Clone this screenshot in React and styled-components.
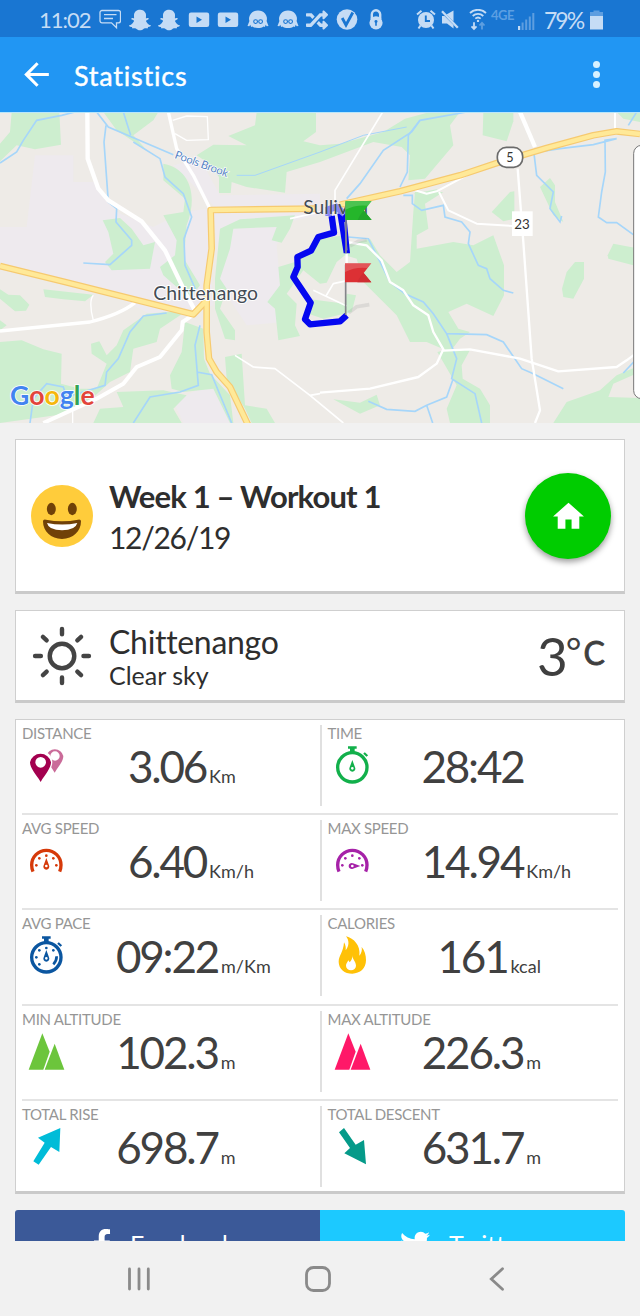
import styled, { createGlobalStyle } from "styled-components";
import { FaFacebookF, FaRandom, FaSnapchatGhost, FaTwitter } from "react-icons/fa";
import { MdArrowBack, MdHome } from "react-icons/md";

const stats = [
  { label: "DISTANCE", icon: "pins", color: "#a3004f", value: "3.06", unit: "Km" },
  { label: "TIME", icon: "timer", color: "#12b04b", value: "28:42", unit: "" },
  { label: "AVG SPEED", icon: "gauge", color: "#d63a0a", value: "6.40", unit: "Km/h" },
  { label: "MAX SPEED", icon: "gaugeMax", color: "#a622a8", value: "14.94", unit: "Km/h" },
  { label: "AVG PACE", icon: "pace", color: "#0b56a0", value: "09:22", unit: "m/Km" },
  { label: "CALORIES", icon: "fire", color: "#ffc107", value: "161", unit: "kcal" },
  { label: "MIN ALTITUDE", icon: "peaks", color: "#6cc53c", value: "102.3", unit: "m" },
  { label: "MAX ALTITUDE", icon: "peaks", color: "#ff1868", value: "226.3", unit: "m" },
  { label: "TOTAL RISE", icon: "rise", color: "#00bcd8", value: "698.7", unit: "m" },
  { label: "TOTAL DESCENT", icon: "descent", color: "#059a89", value: "631.7", unit: "m" },
];

const Dots = ({ points }) => points.map(([x, y]) => <circle key={`${x}-${y}`} cx={x} cy={y} r="4" />);

const StatIcon = ({ name, color }) => (
  <StatSvg viewBox="0 0 132 132" fill={color}>
    {name === "pins" && (
      <>
        <path
          opacity="0.58"
          fillRule="evenodd"
          d="M92 89C80 70 67 54 67 39a26 25 0 0 1 51 0C118 54 104 70 92 89ZM93 25a14 14 0 1 0 0 28a14 14 0 1 0 0-28Z"
        />
        <path d="M50 122C34 98 15 77 15 58a35 35 0 0 1 70 0C85 77 66 98 50 122Z" fill="#fff" />
        <path
          fillRule="evenodd"
          d="M50 117C36 94 18 76 18 58a32 31 0 0 1 63 0C81 76 64 94 50 117ZM50 42a16 16 0 1 0 0 32a16 16 0 1 0 0-32Z"
        />
      </>
    )}
    {(name === "gauge" || name === "gaugeMax") && (
      <>
        <path d="M27 101Q23 92 23 81a44 44 0 0 1 88 0Q111 92 107 101" fill="none" stroke={color} strokeWidth="10" />
        <Dots points={[[37, 82], [46, 61], [67, 53], [88, 61], [97, 82]]} />
        <path
          transform={name === "gaugeMax" ? "rotate(90 67 84)" : undefined}
          fillRule="evenodd"
          d="M67 60l8 22a9 9 0 1 1-16 0ZM67 80a4 4 0 1 0 0 8a4 4 0 1 0 0-8Z"
        />
      </>
    )}
    {(name === "timer" || name === "pace") && (
      <>
        <circle cx="67" cy="73" r="44" fill="none" stroke={color} strokeWidth="10" />
        <path d="M54 10h26v7h-6v12H60V17h-6Z" />
        <path d="M102 30l10 9" stroke={color} strokeWidth="7" />
        <path
          fillRule="evenodd"
          d="M67 51l8 22a9 9 0 1 1-16 0ZM67 72a4 4 0 1 0 0 8a4 4 0 1 0 0-8Z"
        />
        {name === "pace" && (
          <>
            <Dots points={[[37, 73], [46, 52], [67, 45], [88, 52], [46, 94]]} />
            <path d="M98 70q0 14-10 24" fill="none" stroke={color} strokeWidth="8" />
          </>
        )}
      </>
    )}
    {name === "fire" && (
      <>
        <path d="M48 10C72 16 92 38 88 68C94 62 97 52 95 42C104 52 108 66 108 82C108 106 90 122 67 122C44 122 26 108 26 86C26 68 40 58 42 28C47 36 48 44 47 52C57 40 59 24 48 10Z" />
        <path d="M67 66C66 78 78 86 78 98a15 14 0 0 1-30 0C48 92 52 88 55 82L59 88C65 82 67 76 67 66Z" fill="#fff" />
      </>
    )}
    {name === "peaks" && (
      <>
        <path d="M55 13L14 122H58L77 68Z" />
        <path d="M92 44L62 122H121Z" />
      </>
    )}
    {name === "rise" && <path d="M109 12L42 41L62 56L28 112L44 122L81 69L106 84Z" />}
    {name === "descent" && <path d="M42 12L27 25L60 72L43 88L108 121L102 48L77 62Z" />}
  </StatSvg>
);

const Face = () => (
  <svg viewBox="0 0 22 22" width="22" height="22" fill="currentColor">
    <path d="M11 1.500a8.800 8.200 0 0 1 8.600 10.500L21.500 17l-1.800.3-1-1.500-.8 2.200-1.300-.6C15.200 18.500 13.200 19 11 19s-4.200-.5-5.600-1.600l-1.300.6-.8-2.200-1 1.500L.5 17l1.900-5A8.800 8.200 0 0 1 11 1.500Z" />
    <g fill="none" stroke="#1976d2" strokeWidth="1.100">
      <circle cx="8.600" cy="12.600" r="1.900" />
      <circle cx="13.600" cy="12.600" r="1.900" />
    </g>
  </svg>
);

const Play = () => (
  <svg viewBox="0 0 22 22" width="22" height="22" fill="currentColor">
    <path fillRule="evenodd" d="M3 3.500h16a2.200 2.200 0 0 1 2.200 2.200v10.100A2.200 2.200 0 0 1 19 18H3a2.200 2.200 0 0 1-2.200-2.200V5.700A2.200 2.200 0 0 1 3 3.500ZM8.500 7.500v6.400l5.500-3.200Z" />
  </svg>
);

const StatusBar = () => (
  <Status>
    <Clock>11:02</Clock>
    <Notifications>
      <svg viewBox="0 0 22 22" width="22" height="22" fill="none" stroke="currentColor" strokeWidth="1.300">
        <path d="M3 1.500h16.500a2 2 0 0 1 2 2v8.300a2 2 0 0 1-2 2h-2v5l-5-5H3a2 2 0 0 1-2-2V3.500a2 2 0 0 1 2-2ZM5 5.700h12.500M5 9.500h9" />
      </svg>
      <FaSnapchatGhost size={22} />
      <FaSnapchatGhost size={22} />
      <Play />
      <Play />
      <Face />
      <Face />
      <FaRandom size={22} />
      <svg viewBox="0 0 22 22" width="22" height="22">
        <circle cx="11" cy="10.500" r="10.300" fill="currentColor" />
        <path d="M6.200 9l3.800 7L16.800 3.500" fill="none" stroke="#1976d2" strokeWidth="2.800" />
      </svg>
      <svg viewBox="0 0 22 22" width="22" height="22">
        <path d="M6.800 10V5.500a4.200 4.200 0 0 1 8.400 0V10" fill="none" stroke="currentColor" strokeWidth="2.400" />
        <circle cx="11" cy="13.800" r="6.600" fill="currentColor" />
        <path d="M11 11a1.500 1.500 0 0 1 .8 2.800v3h-1.600v-3A1.500 1.500 0 0 1 11 11Z" fill="#1976d2" />
      </svg>
    </Notifications>
    <Signals>
      <svg viewBox="0 0 20 22" width="20" height="22" fill="none" stroke="currentColor">
        <circle cx="10" cy="11" r="8" fill="currentColor" stroke="none" />
        <path d="M1 5.500L5.500 1.700M19 5.500L14.500 1.700M4.500 16.500L2.500 19.500M15.500 16.500L17.500 19.500" strokeWidth="2" />
        <path d="M9.800 6.500V12H14" stroke="#1976d2" strokeWidth="1.900" />
      </svg>
      <Gap $left={5}>
        <svg viewBox="0 0 18 22" width="18" height="22" fill="currentColor">
          <path d="M5.500 5.500L12.500 1.500V12.500ZM1 7h2.500L12.500 16v3.500L6 14.500H1Z" />
          <path d="M1 2.200L16.800 18.700" stroke="currentColor" strokeWidth="2.300" />
        </svg>
      </Gap>
      <Gap $left={10}>
        <svg viewBox="0 0 18 22" width="18" height="22" fill="none" stroke="currentColor" strokeWidth="1.800">
          <path d="M1 4a11.500 11.500 0 0 1 16 0M3.700 7a7.600 7.600 0 0 1 10.600 0M6.300 9.700a4 4 0 0 1 5.400 0" />
          <circle cx="9" cy="11.900" r="1.200" fill="currentColor" stroke="none" />
          <path d="M5 13.300v6.500M2.500 17.300L5 20l2.500-2.700" />
          <path d="M13 20.500V14M10.500 16.500l2.500-2.700 2.500 2.700" opacity="0.4" />
        </svg>
      </Gap>
      <Network>4GE</Network>
      <Gap $left={3}>
        <svg viewBox="0 0 17 22" width="17" height="22" fill="currentColor">
          <path d="M0 17h2.200v4H0Z" />
          <path opacity="0.4" d="M3.600 13.500h2V21h-2ZM7.200 10.500h2V21h-2ZM10.800 7.500h2V21h-2ZM14.300 4h2v17h-2Z" />
        </svg>
      </Gap>
      <Percent>79%</Percent>
      <Gap $left={6}>
        <svg viewBox="0 0 13 22" width="13" height="22" fill="currentColor">
          <path opacity="0.4" d="M3.500 1.500h6V3H13v4H0V3h3.500Z" />
          <path d="M0 7h13v13.500H0Z" />
        </svg>
      </Gap>
    </Signals>
  </Status>
);

const Flag = ({ x, y, color, dark, pole }) => (
  <g transform={`translate(${x} ${y})`}>
    <path d={`M1 4V${pole}`} stroke="#85858a" strokeWidth="5" />
    <path d="M-1 0H78L55 29L78 57H-1Z" fill={color} />
    <path d="M36 57Q46 34 55 29L78 57Z" fill={dark} />
    <path d="M-1 0H78L66 14Q30 10-1 26Z" fill="#fff" opacity="0.180" />
  </g>
);

const RouteMap = () => (
  <MapSvg viewBox="0 0 1920 933" preserveAspectRatio="none">
    <rect width="1920" height="933" fill="#eeebe7" />
    <g fill="#eeeaee">
      <path d="M105 130H220V210H290L350 300L460 345L550 300L620 290L640 580L480 620L360 560L0 450V345H80Z" />
      <path d="M520 160L600 140L660 250L960 245V310L860 330L830 400L850 630L740 640L660 520L640 280Z" />
      <path d="M560 850L640 810L700 933H550L525 880Z" />
    </g>
    <g fill="#cdeecf">
      <path d="M35 0H178L183 98L105 112L50 100L0 148V95L30 60Z" />
      <path d="M310 0H475L460 25L400 70L440 115L350 55Z" />
      <path d="M770 0H948V60L910 88L960 100L1020 95L1150 60L1215 20L1290 0H1380L1350 40L1360 100L1275 200L1225 205L1230 130L1205 105L1120 90L960 150L910 165L860 180L855 242L740 225L695 210L692 243H657V195L620 150L590 130L640 98L740 100L685 72L765 40Z" />
      <path d="M1450 0H1540V28L1520 88L1448 70Z" />
      <path d="M1850 0H1920V30L1870 20Z" />
      <path d="M490 155C570 170 595 250 560 340L552 440L600 520L570 560L490 490L480 465L525 430L530 385L490 310L550 300L555 260L490 205Z" />
      <path d="M308 325L360 318L395 350L430 400L465 390L450 470L335 475L315 450L340 425L325 360Z" />
      <path d="M130 532L280 548L255 568L190 562L135 555Z" />
      <path d="M0 532L25 548L60 550L88 578L78 596L45 598L0 560ZM0 625L20 640L0 655Z" />
      <path d="M0 690L65 685L130 712L185 725L183 815L240 830L290 830L320 755L275 725L273 695L298 688L320 730L350 700L370 655L440 605L505 600L555 600L480 650L470 690L400 710L390 780L330 810L275 860L200 905L0 933Z" />
      <path d="M555 630L610 650L612 740L630 785L690 850L700 933H690L640 830L550 840L515 830L510 790L545 720Z" />
      <path d="M350 840L490 835L560 850L520 890L545 933H280L300 890L370 885Z" />
      <path d="M655 400L660 350L720 322L885 310L870 350L845 392L815 385L830 345L700 350L690 410L660 500L680 530L660 590L705 655V685L675 680L645 590L645 500Z" />
      <path d="M725 725L735 880L800 890L825 933H755L735 890L680 800L675 735Z" />
      <path d="M885 450L960 380L1035 370L1040 400L1110 380L1140 430L1190 480L1230 450L1240 300L1245 240L1330 240L1275 275L1285 350L1250 370L1250 410L1360 390L1420 400L1480 370L1512 460V550L1480 612L1400 575L1345 600L1375 650L1410 660L1380 680L1350 720L1280 690L1230 690L1190 610L1090 510L1070 440L1035 430L1010 450L980 512L960 515L910 475L860 545L890 575L885 640L900 672L835 685L825 590L802 570L840 520L835 465Z" />
      <path d="M920 560L1035 575L1040 545L1068 550L1055 600L970 620L925 605Z" />
      <path d="M1312 720L1345 712L1410 714L1385 760L1388 800L1440 830L1470 880V933H1350L1340 890L1370 820Z" />
      <path d="M1000 862L1080 872L1130 848L1140 880L1080 905Z" />
      <path d="M1475 300L1530 240L1543 238V320L1510 328Z" />
      <path d="M1620 225L1650 198L1665 220V270L1690 330L1660 310Z" />
      <path d="M1686 530L1700 480L1725 450H1752V500L1720 560L1690 555Z" />
      <path d="M1823 430L1840 395L1920 410V465L1825 440Z" />
      <path d="M1660 933L1700 870L1800 835L1850 790L1920 760V780L1840 815L1825 855L1920 858V933Z" />
      <path d="M1240 245L1310 232L1320 245L1280 255Z" />
    </g>
    <g fill="none" stroke="#a6d6fa" strokeWidth="5">
      <path d="M0 153L50 120L70 85L110 25L185 10L225 0" />
      <path d="M290 0L325 45L520 128M370 0L392 70M318 40L312 90L325 270L350 290L348 330L395 385L395 400L330 458L250 453" />
      <path d="M400 90L480 140L495 195L550 245L575 315L552 380L555 460L590 540" />
      <path d="M710 190L765 190L960 120L1090 70L1220 45" strokeWidth="3" />
      <path d="M500 603L430 612L390 660L355 740L320 780L315 820L200 855L190 825L140 815L100 860L90 933" />
      <path d="M400 933L450 855L540 840L595 820L585 700L600 640M590 780L635 788L695 933" />
      <path d="M1400 0L1260 25L1235 60L1150 115L1080 215L1040 260" />
      <path d="M1260 25L1225 70L1222 180L1200 225M1210 250L1237 250V275L1265 295L1330 280L1335 315L1385 330L1410 360L1405 395L1435 460L1460 470L1470 500L1510 535L1540 543" />
      <path d="M1045 375L1105 380L1140 450L1170 510L1215 545L1270 570L1300 605L1340 665L1460 668L1510 690L1565 770L1600 785L1690 830" />
      <path d="M1340 665L1370 740L1355 800L1425 845L1445 933M1358 805L1340 855L1280 880L1245 898L1160 892L1105 868M1280 880L1298 933" />
      <path d="M1602 125L1610 190L1660 240L1650 290L1680 330L1685 312" />
      <path d="M1600 122L1680 110L1780 98L1850 80L1815 85L1816 180L1805 240L1795 315L1820 332L1850 332L1900 368" />
      <path d="M1885 40L1910 0M1920 730L1870 783" />
    </g>
    <g fill="none" stroke="#fff" strokeWidth="10" strokeLinejoin="round">
      <path d="M262 0L263 140L295 230L325 265L425 328L495 415L560 550L590 605" strokeWidth="13" />
      <path d="M505 0L530 110L580 190L630 290" />
      <path d="M518 25L560 12L622 14L625 83L560 85L525 65" strokeWidth="4" />
      <path d="M0 657L270 630C330 615 370 600 405 572" />
      <path d="M585 605L548 630L545 655L480 735L410 765L370 815L290 860L130 933" strokeWidth="12" />
      <path d="M280 625C270 590 270 560 280 550M218 895V933" strokeWidth="4" />
      <path d="M705 730L760 765L825 770L930 850L1030 933M930 850L960 845" strokeWidth="5" />
      <path d="M870 320L960 300M940 535L1040 582M978 552L1000 515L1045 505" strokeWidth="5" />
      <path d="M1148 0L1005 235V280" strokeWidth="5" />
      <path d="M1560 0L1605 105" strokeWidth="13" />
      <path d="M1845 0V55M1245 235L1280 245L1310 238L1400 190M1317 240L1345 295L1430 335L1540 342" strokeWidth="6" />
      <path d="M1040 390L1100 400L1145 445L1170 510L1210 535L1240 580L1285 610L1300 660L1330 712L1310 755L1255 795L1110 830L960 842M1330 716L1410 712L1560 740L1675 778L1850 765L1880 745L1920 715" strokeWidth="7" />
      <path d="M1553 170L1570 390L1595 740L1620 895L1605 933M1040 424V454" strokeWidth="7" />
    </g>
    {[["#f6ca70", 20], ["#ffe998", 13]].map(([stroke, width]) => (
      <g key={stroke} fill="none" stroke={stroke} strokeWidth={width} strokeLinejoin="round">
        <path d="M0 462L195 510L580 607L620 565" />
        <path d="M950 290L632 294L635 410L620 520L620 660L627 740L650 780L690 825L745 940" />
        <path d="M1020 278L1200 238L1380 190L1500 150L1640 108L1780 70L1850 58L1920 66" />
      </g>
    ))}
    <path
      d="M1040 610L1020 628L930 637L915 622L932 572L880 495L893 465L892 435L933 416L955 375L1002 362L995 312"
      fill="none"
      stroke="#0508f0"
      strokeWidth="19"
      strokeLinejoin="round"
    />
    <path d="M1012 305L1031 424H1050L1038 300Z" fill="#0508f0" />
    <path d="M1034 330L1041 415" stroke="#9a9ac8" strokeWidth="3" />
    <path d="M986 312V292L1008 285L1034 306" fill="none" stroke="#8583f3" strokeWidth="20" />
    <g fontFamily="Lato, sans-serif" fill="#444c55" stroke="#fff" strokeWidth="6" paintOrder="stroke">
      <text x="460" y="563" fontSize="57" textLength="314" lengthAdjust="spacingAndGlyphs">Chittenango</text>
      <text x="910" y="306" fontSize="57" strokeWidth="1" textLength="194" lengthAdjust="spacingAndGlyphs">Sullivan</text>
      <text x="522" y="138" fontSize="34" fill="#5683c4" strokeWidth="4" transform="rotate(20 522 138)" textLength="168">
        Pools Brook
      </text>
    </g>
    <path d="M1050 402L1075 388L1100 384M1046 602L1070 584L1108 578" stroke="#999" strokeWidth="11" opacity="0.22" fill="none" />
    <Flag x={1037} y={267} color="#25b62b" dark="#22a52a" pole={157} />
    <Flag x={1036} y={454} color="#dc3034" dark="#cf2d33" pole={155} />
    <rect x="1492" y="106" width="76" height="60" rx="27" fill="#fff" stroke="#6b6b6b" strokeWidth="5" />
    <rect x="1536" y="298" width="62" height="74" fill="#fff" />
    <g fontFamily="Lato, sans-serif" fill="#333" textAnchor="middle">
      <text x="1530" y="149" fontSize="38">5</text>
      <text x="1566" y="351" fontSize="40">23</text>
    </g>
    <rect x="1901" y="100" width="60" height="760" rx="24" fill="#fff" stroke="#777" strokeWidth="3" />
    <text x="30" y="878" fontFamily="Lato, sans-serif" fontSize="82" stroke="#fff" strokeWidth="5" paintOrder="stroke" textLength="254" lengthAdjust="spacingAndGlyphs">
      <Letter $color="#4284f0">G</Letter>
      <Letter $color="#e2453b">o</Letter>
      <Letter $color="#f5b70c">o</Letter>
      <Letter $color="#4284f0">g</Letter>
      <Letter $color="#34a353">l</Letter>
      <Letter $color="#e2453b">e</Letter>
    </text>
    <rect width="1920" height="3" fill="#b9e6fb" />
  </MapSvg>
);

const App = () => {
  return (
    <Screen>
      <GlobalStyle />
      <StatusBar />
      <AppBar>
        <MdArrowBack size={37} />
        <h1>Statistics</h1>
        <MenuDots>
          <i />
          <i />
          <i />
        </MenuDots>
      </AppBar>
      <RouteMap />

      <Content>
        <Card $height={155}>
          <Emoji viewBox="0 0 186 186">
            <circle cx="93" cy="93" r="93" fill="#ffcc3b" />
            <g fill="#704108">
              <ellipse cx="61" cy="72" rx="13.500" ry="18.500" />
              <ellipse cx="124" cy="72" rx="13.500" ry="18.500" />
              <path d="M36 109q0-7 9-5q48 9 96 0q9-2 9 5c0 30-24 53-57 53s-57-23-57-53Z" />
            </g>
            <path d="M48 114q46 9 91 0q-6 22-46 22t-45-22Z" fill="#fff" />
          </Emoji>
          <Details>
            <WorkoutName>Week 1 – Workout 1</WorkoutName>
            <WorkoutDate>12/26/19</WorkoutDate>
          </Details>
          <HomeButton>
            <MdHome size={37} />
          </HomeButton>
        </Card>

        <Card $height={93}>
          <Sun viewBox="0 0 176 176">
            <circle cx="88" cy="88" r="36" />
            <path d="M88 9v15M88 151v16M9 88h17M151 88h16M32 32l11 10M144 32l-11 10M32 144l11-10M144 144l-11-10" />
          </Sun>
          <Details>
            <Place>Chittenango</Place>
            <Sky>Clear sky</Sky>
          </Details>
          <Temperature>
            3<Degree>°</Degree>
            <Celsius>C</Celsius>
          </Temperature>
        </Card>

        <StatGrid>
          {stats.map((stat, i) => (
            <Stat key={stat.label} $right={i % 2 === 1} $last={i > 7}>
              <StatLabel>{stat.label}</StatLabel>
              <StatBody>
                <StatIcon name={stat.icon} color={stat.color} />
                <Reading>
                  <Value>{stat.value}</Value>
                  <Unit>{stat.unit}</Unit>
                </Reading>
              </StatBody>
            </Stat>
          ))}
        </StatGrid>

        <Share>
          <ShareButton $color="#3b5998" $pad={72} $gap={13}>
            <FaFacebookF size={30} />
            Facebook
          </ShareButton>
          <ShareButton $color="#1cc9ff" $pad={80} $gap={19}>
            <FaTwitter size={30} />
            Twitter
          </ShareButton>
        </Share>
      </Content>

      <NavBar>
        <svg viewBox="0 0 24 24" width="24" height="24">
          <path d="M2.500 2v20M12 2v20M21.300 2v20" />
        </svg>
        <svg viewBox="0 0 26 26" width="26" height="26">
          <rect x="1.500" y="1.500" width="23" height="23" rx="7" />
        </svg>
        <svg viewBox="0 0 24 24" width="24" height="24">
          <path d="M17.500 1.800L6.300 12l11.200 10.200" />
        </svg>
      </NavBar>
    </Screen>
  );
};

export default App;

const GlobalStyle = createGlobalStyle`
  * {
    box-sizing: border-box;
  }

  body {
    margin: 0;
    background: #f1f1f1;
    font-family: Lato, "Open Sans", sans-serif;
    font-variant-ligatures: none;
  }
`;

const Screen = styled.div`
  width: 640px;
  height: 1316px;
  display: flex;
  flex-direction: column;
  overflow: hidden;
  background: #f1f1f1;
`;

const Status = styled.div`
  flex: none;
  height: 37px;
  padding: 2px 37px 0 39px;
  display: flex;
  align-items: center;
  background: #1976d2;
  color: #c5dcf5;
`;

const Clock = styled.span`
  width: 60px;
  font-size: 22px;
  letter-spacing: -1px;
`;

const Notifications = styled.div`
  display: flex;
  gap: 7.6px;
`;

const Signals = styled.div`
  margin-left: auto;
  display: flex;
  align-items: center;
`;

const Gap = styled.span`
  display: flex;
  margin-left: ${({ $left }) => $left}px;
`;

const Network = styled.span`
  width: 24px;
  margin: -10px 0 0 4px;
  font-size: 13px;
  font-weight: 700;
  letter-spacing: -0.5px;
  color: #5c9fe2;
`;

const Percent = styled.span`
  width: 40px;
  margin-left: 9px;
  font-size: 23px;
  letter-spacing: -2px;
`;

const AppBar = styled.header`
  flex: none;
  height: 75px;
  padding: 0 40px 0 18px;
  display: flex;
  align-items: center;
  background: #2196f3;
  color: #fff;

  h1 {
    margin: 2px 0 0 19px;
    font-size: 27px;
    font-weight: 400;
    letter-spacing: 0.8px;
    -webkit-text-stroke: 0.4px;
  }
`;

const MenuDots = styled.div`
  margin-left: auto;
  display: flex;
  flex-direction: column;
  gap: 2.6px;

  i {
    width: 7px;
    height: 7px;
    border-radius: 50%;
    background: #d8f1ff;
  }
`;

const MapSvg = styled.svg`
  flex: none;
  display: block;
  width: 640px;
  height: 311px;
`;

const Letter = styled.tspan`
  fill: ${({ $color }) => $color};
  font-weight: 700;
`;

const Content = styled.main`
  flex: 1;
  min-height: 0;
  overflow: hidden;
  padding: 15.5px 15px 0;
  display: flex;
  flex-direction: column;
  gap: 16px;
`;

const Card = styled.section`
  flex: none;
  height: ${({ $height }) => $height}px;
  padding: 2px 13px 0 15px;
  display: flex;
  align-items: center;
  background: #fff;
  border: 1px solid #cfcfcf;
  border-bottom: 3px solid #cacaca;
`;

const Emoji = styled.svg`
  width: 62px;
  height: 62px;
`;

const Sun = styled.svg`
  width: 62px;
  height: 62px;
  padding: 1px;
  fill: none;
  stroke: #444;
  stroke-width: 13;
  stroke-linecap: round;
`;

const Details = styled.div`
  margin-left: 16px;
  color: #2e2e2e;
  white-space: nowrap;
`;

const WorkoutName = styled.div`
  padding-top: 2px;
  font-size: 31px;
  font-weight: 700;
  line-height: 41px;
  letter-spacing: -0.85px;
`;

const WorkoutDate = styled.div`
  font-size: 30px;
  line-height: 41px;
  letter-spacing: -1.3px;
`;

const Place = styled.div`
  padding-top: 1px;
  font-size: 32px;
  line-height: 37px;
  letter-spacing: -0.3px;
`;

const Sky = styled.div`
  font-size: 25px;
  line-height: 31px;
`;

const HomeButton = styled.button`
  width: 86px;
  height: 86px;
  margin-left: auto;
  padding: 0;
  display: flex;
  align-items: center;
  justify-content: center;
  border: none;
  border-radius: 50%;
  background: #00cc00;
  color: #fff;
  box-shadow: 0 3px 6px rgba(0, 0, 0, 0.4);
`;

const Temperature = styled.div`
  margin: 0 6px 0 auto;
  display: flex;
  align-items: flex-start;
  font-size: 53px;
  line-height: 60px;
  color: #3f3f3f;
`;

const Degree = styled.span`
  margin: 0 2px 0 -2px;
  font-size: 38px;
  line-height: 50px;
`;

const Celsius = styled.span`
  font-size: 32px;
  line-height: 54px;
  -webkit-text-stroke: 0.8px;
`;

const StatGrid = styled.section`
  flex: none;
  height: 475px;
  padding: 0 6px;
  display: grid;
  grid-template-columns: 297.5px 298.5px;
  grid-template-rows: repeat(5, 95.4px);
  background: #fff;
  border: 1px solid #cfcfcf;
  border-bottom: 3px solid #cacaca;
`;

const Stat = styled.div`
  display: flex;
  flex-direction: column;
  margin-top: -1px;
  padding-left: ${({ $right }) => ($right ? 8 : 0)}px;
  border-bottom: 2px solid ${({ $last }) => ($last ? "transparent" : "#e4e4e4")};
  background: ${({ $right }) => ($right ? "linear-gradient(#e0e0e0, #e0e0e0) 0 6px / 2px 81px no-repeat" : "none")};
`;

const StatLabel = styled.div`
  height: 24px;
  padding-top: 3px;
  font-size: 15px;
  line-height: 22px;
  letter-spacing: -0.3px;
  color: #969696;
`;

const StatBody = styled.div`
  display: flex;
`;

const StatSvg = styled.svg`
  flex: none;
  width: 44px;
  height: 44px;
  margin-left: 2px;
`;

const Reading = styled.div`
  width: 198px;
  display: grid;
  grid-template-columns: 1fr auto 1fr;
  align-items: baseline;
  white-space: nowrap;
  color: #404040;
  line-height: 47px;
`;

const Value = styled.span`
  grid-column: 2;
  font-size: 44px;
  letter-spacing: -2.2px;
`;

const Unit = styled.span`
  width: 0;
  padding-left: 3px;
  font-size: 18px;
`;

const Share = styled.div`
  flex: none;
  height: 68px;
  display: flex;
  border-radius: 3px;
  overflow: hidden;
`;

const ShareButton = styled.div`
  flex: none;
  width: 305px;
  display: flex;
  align-items: center;
  gap: ${({ $gap }) => $gap}px;
  padding-left: ${({ $pad }) => $pad}px;
  background: ${({ $color }) => $color};
  color: #fff;
  font-size: 25px;
`;

const NavBar = styled.nav`
  flex: none;
  height: 75px;
  padding: 0 131px 0 127px;
  display: flex;
  align-items: center;
  justify-content: space-between;
  background: #f1f1f1;

  svg {
    fill: none;
    stroke: #8a8a8a;
    stroke-width: 2.8;
    stroke-linecap: round;
  }
`;
